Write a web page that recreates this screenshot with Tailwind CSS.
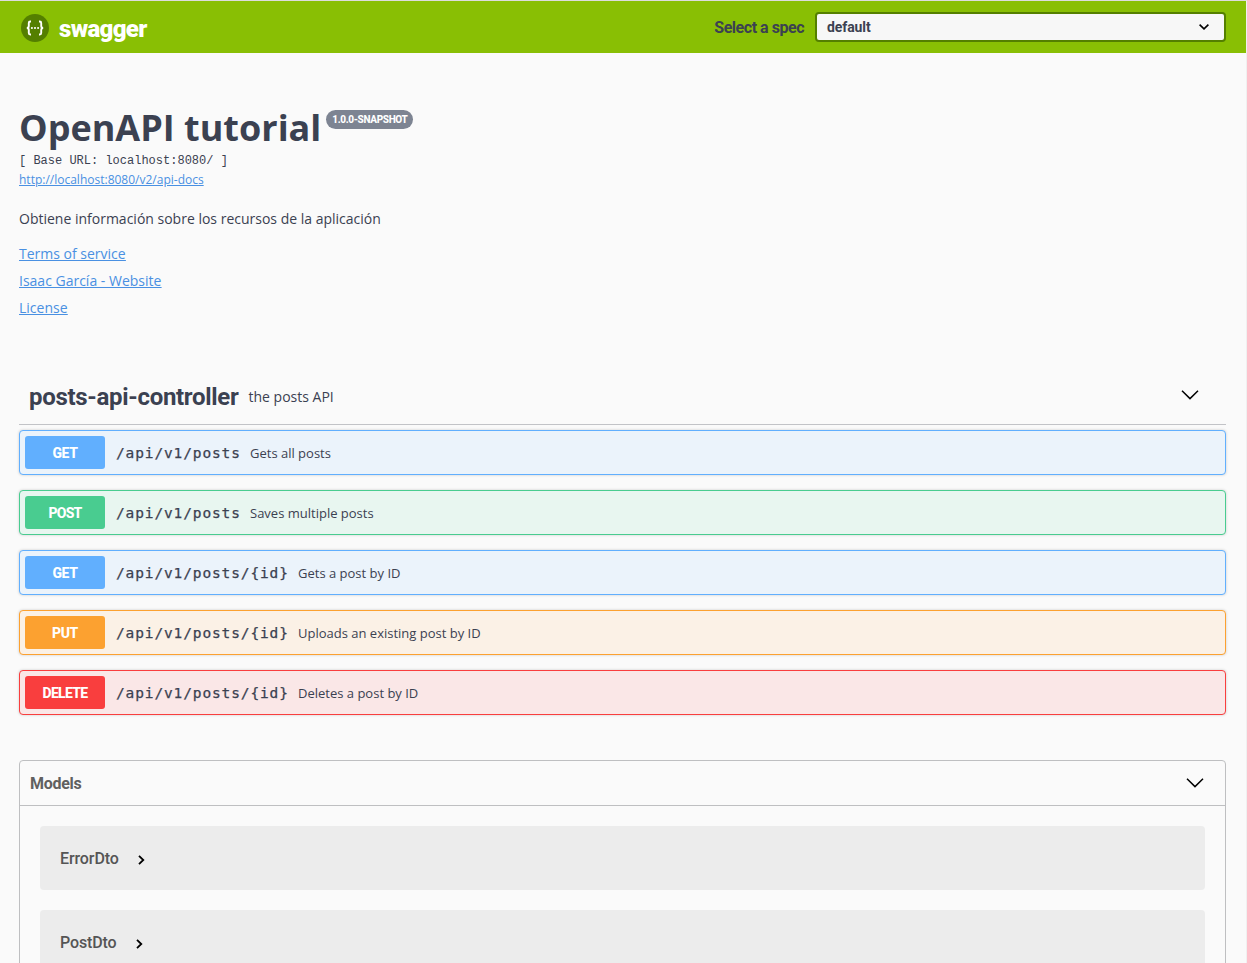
<!DOCTYPE html>
<html lang="es">
<head>
<meta charset="utf-8">
<title>Swagger UI</title>
<script src="https://cdn.jsdelivr.net/npm/@tailwindcss/browser@4"></script>
</head>
<body class="bg-[#fafafa] font-['Open_Sans',sans-serif] text-[#3b4151]">
<div class="h-[963px] overflow-hidden border-t border-r border-t-[#dcdcdc] border-r-[#f0f0f0] whitespace-nowrap">
  <header class="flex h-[52px] items-center bg-[#89bf04] pl-[21px] pr-5 font-[Roboto,sans-serif] font-bold">
    <svg class="mt-[2px] h-7 w-7" viewBox="0 0 28 28" fill="none">
      <circle cx="14" cy="14" r="14" fill="#547f00"/>
      <path d="M10 7.5H9.2Q7.800 7.500 7.800 9v3Q7.800 14 5.800 14Q7.800 14 7.800 16v3Q7.800 20.500 9.200 20.500H10M18 7.500h.8Q20.200 7.500 20.200 9v3Q20.200 14 22.200 14Q20.200 14 20.200 16v3Q20.200 20.500 18.800 20.500H18" stroke="#fff" stroke-width="1.900"/>
      <g fill="#fff"><circle cx="10.900" cy="14" r="1.050"/><circle cx="14" cy="14" r="1.050"/><circle cx="17.100" cy="14" r="1.050"/></g>
    </svg>
    <span class="ml-[10px] mt-[3px] text-[24px] font-black leading-7 tracking-[-0.65px] text-white">swagger</span>
    <span class="ml-auto mr-[11px] mt-[2px] text-[16px] leading-6 tracking-[-0.47px]">Select a spec</span>
    <div class="flex h-[30px] w-[411px] items-center justify-between rounded border-2 border-[#547f00] bg-[#f7f7f7] pl-[10px] pr-[15px] text-[14px]">
      <span class="tracking-[-0.1px]">default</span>
      <svg class="h-[6px] w-[10px]" viewBox="0 0 10 6" fill="none" stroke="#000" stroke-width="1.600"><path d="M.6.6 5 4.900 9.400.6"/></svg>
    </div>
  </header>
  <main class="pl-[19px] pr-5">
    <section class="pt-[53px]">
      <div class="flex h-[44px] items-start">
        <h1 class="text-[36px] font-bold leading-[44px]">OpenAPI tutorial</h1>
        <span class="ml-[5px] mt-1 flex h-[19px] w-[87px] items-center justify-center rounded-full bg-[#7d8492] font-[Roboto,sans-serif] text-[10px] font-extrabold tracking-[-0.35px] text-white">1.0.0-SNAPSHOT</span>
      </div>
      <pre class="h-5 font-['Liberation_Mono',monospace] text-[12px] leading-[22px]">[ Base URL: localhost:8080/ ]</pre>
      <div class="h-5 text-[12px] leading-5"><a class="text-[#4990e2] underline">http://localhost:8080/v2/api-docs</a></div>
      <p class="mt-[18px] text-[14px] leading-[22px]">Obtiene información sobre los recursos de la aplicación</p>
      <div class="mt-[10px] flex flex-col items-start text-[14px] leading-[27px] text-[#4990e2] underline">
        <a>Terms of service</a><a>Isaac García - Website</a><a>License</a>
      </div>
    </section>
    <section class="mt-[48px]">
      <div class="flex h-[56px] items-center border-b border-[#c2c3c7] pl-[10px] pr-[26px]">
        <h2 class="w-[210px] font-[Roboto,sans-serif] text-[24px] font-bold leading-8 tracking-[-0.3px]">posts-api-controller</h2>
        <span class="ml-[9.500px] text-[14px]">the posts API</span>
        <svg class="mb-[3px] ml-auto h-[10px] w-[20px]" viewBox="0 0 20 10" fill="none" stroke="#000" stroke-width="1.500"><path d="M2 .8 10 8.600 18 .8"/></svg>
      </div>
      <div class="mt-[5px] flex flex-col gap-[15px] text-[13px]">
        <div class="flex h-[45px] items-center rounded border border-[#61affe] bg-[#ebf3fb] px-[5px] shadow-[0_0_3px_rgba(0,0,0,.19)]">
          <span class="flex h-[33px] w-20 items-center justify-center rounded-[3px] bg-[#61affe] pt-[2px] font-[Roboto,sans-serif] text-[14px] font-extrabold tracking-[-0.4px] text-white">GET</span>
          <span class="ml-[11px] w-[125px] pt-[2px] font-['DejaVu_Sans_Mono',monospace] text-[14.500px] tracking-[0.87px] [-webkit-text-stroke:0.25px]">/api/v1/posts</span>
          <span class="ml-[9px] pt-[2px]">Gets all posts</span>
        </div>
        <div class="flex h-[45px] items-center rounded border border-[#49cc90] bg-[#e8f6f0] px-[5px] shadow-[0_0_3px_rgba(0,0,0,.19)]">
          <span class="flex h-[33px] w-20 items-center justify-center rounded-[3px] bg-[#49cc90] pt-[2px] font-[Roboto,sans-serif] text-[14px] font-extrabold tracking-[-0.8px] text-white">POST</span>
          <span class="ml-[11px] w-[125px] pt-[2px] font-['DejaVu_Sans_Mono',monospace] text-[14.500px] tracking-[0.87px] [-webkit-text-stroke:0.25px]">/api/v1/posts</span>
          <span class="ml-[9px] pt-[2px]">Saves multiple posts</span>
        </div>
        <div class="flex h-[45px] items-center rounded border border-[#61affe] bg-[#ebf3fb] px-[5px] shadow-[0_0_3px_rgba(0,0,0,.19)]">
          <span class="flex h-[33px] w-20 items-center justify-center rounded-[3px] bg-[#61affe] pt-[2px] font-[Roboto,sans-serif] text-[14px] font-extrabold tracking-[-0.4px] text-white">GET</span>
          <span class="ml-[11px] w-[173px] pt-[2px] font-['DejaVu_Sans_Mono',monospace] text-[14.500px] tracking-[0.87px] [-webkit-text-stroke:0.25px]">/api/v1/posts/{id}</span>
          <span class="ml-[9px] pt-[2px]">Gets a post by ID</span>
        </div>
        <div class="flex h-[45px] items-center rounded border border-[#fca130] bg-[#fbf1e6] px-[5px] shadow-[0_0_3px_rgba(0,0,0,.19)]">
          <span class="flex h-[33px] w-20 items-center justify-center rounded-[3px] bg-[#fca130] pt-[2px] font-[Roboto,sans-serif] text-[14px] font-extrabold tracking-[-0.4px] text-white">PUT</span>
          <span class="ml-[11px] w-[173px] pt-[2px] font-['DejaVu_Sans_Mono',monospace] text-[14.500px] tracking-[0.87px] [-webkit-text-stroke:0.25px]">/api/v1/posts/{id}</span>
          <span class="ml-[9px] pt-[2px]">Uploads an existing post by ID</span>
        </div>
        <div class="flex h-[45px] items-center rounded border border-[#f93e3e] bg-[#fae7e7] px-[5px] shadow-[0_0_3px_rgba(0,0,0,.19)]">
          <span class="flex h-[33px] w-20 items-center justify-center rounded-[3px] bg-[#f93e3e] pt-[2px] font-[Roboto,sans-serif] text-[14px] font-extrabold tracking-[-0.7px] text-white">DELETE</span>
          <span class="ml-[11px] w-[173px] pt-[2px] font-['DejaVu_Sans_Mono',monospace] text-[14.500px] tracking-[0.87px] [-webkit-text-stroke:0.25px]">/api/v1/posts/{id}</span>
          <span class="ml-[9px] pt-[2px]">Deletes a post by ID</span>
        </div>
      </div>
    </section>
    <section class="mt-[45px] h-[300px] rounded border border-[#bebfc1] font-[Roboto,sans-serif] text-[#555]">
      <div class="flex h-[45px] items-center border-b border-[#bebfc1] pl-[10px] pr-5">
        <h3 class="pt-[2px] text-[16px] font-bold tracking-[-0.3px] text-[#606060]">Models</h3>
        <svg class="ml-auto h-[10px] w-[20px]" viewBox="0 0 20 10" fill="none" stroke="#000" stroke-width="1.500"><path d="M2 .8 10 8.600 18 .8"/></svg>
      </div>
      <div class="flex flex-col gap-5 p-5 text-[16px] font-medium">
        <div class="flex h-16 items-center rounded bg-[#ececec] pl-5">
          <span class="pt-[2px] tracking-[-0.1px]">ErrorDto</span>
          <svg class="ml-[19.500px] mt-1 h-[10px] w-[7px]" viewBox="0 0 7 10" fill="none" stroke="#000" stroke-width="1.800"><path d="M1 .8 5.300 5 1 9.200"/></svg>
        </div>
        <div class="flex h-16 items-center rounded bg-[#ececec] pl-5">
          <span class="pt-[2px] tracking-[-0.15px]">PostDto</span>
          <svg class="ml-[19.500px] mt-1 h-[10px] w-[7px]" viewBox="0 0 7 10" fill="none" stroke="#000" stroke-width="1.800"><path d="M1 .8 5.300 5 1 9.200"/></svg>
        </div>
      </div>
    </section>
  </main>
</div>
</body>
</html>
